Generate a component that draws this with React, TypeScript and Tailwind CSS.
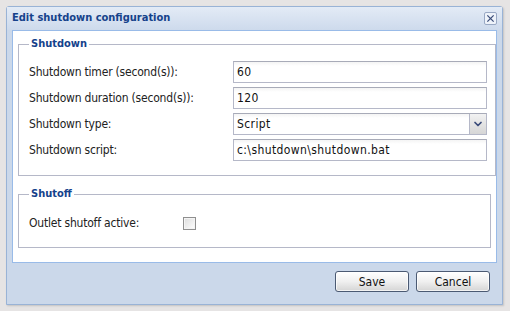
import { ChevronDown } from 'lucide-react';

const FONT = "font-['DejaVu_Sans_Condensed','DejaVu_Sans',Tahoma,sans-serif]";

type Row = { label: string; value: string; select?: boolean };

const SHUTDOWN_ROWS: Row[] = [
  { label: 'Shutdown timer (second(s)):', value: '60' },
  { label: 'Shutdown duration (second(s)):', value: '120' },
  { label: 'Shutdown type:', value: 'Script', select: true },
  { label: 'Shutdown script:', value: 'c:\\shutdown\\shutdown.bat' },
];

function FieldRow({ row }: { row: Row }) {
  return (
    <div className="flex items-center h-[22px]">
      <label className="w-[204px] shrink-0 text-[12px] tracking-[-0.2px] text-[#222]">{row.label}</label>
      <div className="flex-1 flex h-[22px] border border-[#b5b8c8] border-t-[#a8abb8] bg-white">
        <div className="flex-1 flex items-center pl-[3px] text-[12px] tracking-[0.4px] text-[#111] bg-gradient-to-b from-[#f4f4f4] to-white to-[20%]">
          {row.value}
        </div>
        {row.select && (
          <div className="w-[17px] flex items-center justify-center border-l border-[#b5b8c8] bg-gradient-to-b from-[#f2f2f2] to-[#d6d6d6]">
            <ChevronDown className="w-3 h-3 text-[#3a4b7a]" strokeWidth={3.5} />
          </div>
        )}
      </div>
    </div>
  );
}

function Legend({ children }: { children: React.ReactNode }) {
  return (
    <legend className="px-[2px] text-[11px] font-bold text-[#15428b] leading-[14px]">
      {children}
    </legend>
  );
}

function Button({ children }: { children: React.ReactNode }) {
  return (
    <button className="w-[74px] h-[21px] rounded-[3px] border border-[#4b5a73] bg-gradient-to-b from-white via-[#f0f0f0] to-[#d5d5d5] text-[12px] text-[#111] shadow-[inset_0_0_0_1px_rgba(255,255,255,0.7)]">
      {children}
    </button>
  );
}

export default function App() {
  return (
    <div className={`${FONT} w-[510px] h-[311px] bg-[#e6e4e4] pt-[6px] pl-[6px]`}>
      <div className="w-[497px] h-[299px] flex flex-col border border-[#99b3d6] rounded-t-[3px] bg-[#cbd8ea] shadow-[1px_1px_2px_rgba(0,0,0,0.15)]">
        {/* header */}
        <div className="h-[23px] shrink-0 flex items-center justify-between pl-[5px] pr-[5px] bg-gradient-to-b from-[#e3ebf6] to-[#cddaec]">
          <span className="text-[11px] font-bold text-[#15428b]">Edit shutdown configuration</span>
          <button className="w-[13px] h-[13px] flex items-center justify-center rounded-[2px] border border-[#99a9c4] bg-[#eef3fa]">
            <svg viewBox="0 0 10 10" className="w-[9px] h-[9px]">
              <path d="M1.5 1.5 L8.5 8.5 M8.5 1.5 L1.5 8.5" stroke="#3c4e7a" strokeWidth="1.4" fill="none" />
            </svg>
          </button>
        </div>

        {/* body */}
        <div className="mx-[5px] h-[233px] shrink-0 border border-[#99bbe8] bg-white pt-[6px] pl-[5px]">
          <fieldset className="border border-[#b5b8c8] pl-[10px] pr-[8px] pb-[14px]">
            <Legend>Shutdown</Legend>
            <div className="flex flex-col gap-[4px] pt-[10px]">
              {SHUTDOWN_ROWS.map((r) => (
                <FieldRow key={r.label} row={r} />
              ))}
            </div>
          </fieldset>

          <fieldset className="mt-[11px] mr-[5px] border border-[#b5b8c8] pl-[10px] pb-[13px]">
            <Legend>Shutoff</Legend>
            <div className="flex items-center h-[22px] mt-[11px]">
              <label className="w-[154px] shrink-0 text-[12px] tracking-[-0.2px] text-[#222]">Outlet shutoff active:</label>
              <span className="w-[13px] h-[13px] border border-[#8f8f8f] bg-gradient-to-br from-[#dcdcdc] to-white shadow-[inset_0_0_0_1px_#f4f4f4]" />
            </div>
          </fieldset>
        </div>

        {/* footer */}
        <div className="flex justify-end gap-[7px] pt-[8px] pr-[12px]">
          <Button>Save</Button>
          <Button>Cancel</Button>
        </div>
      </div>
    </div>
  );
}
